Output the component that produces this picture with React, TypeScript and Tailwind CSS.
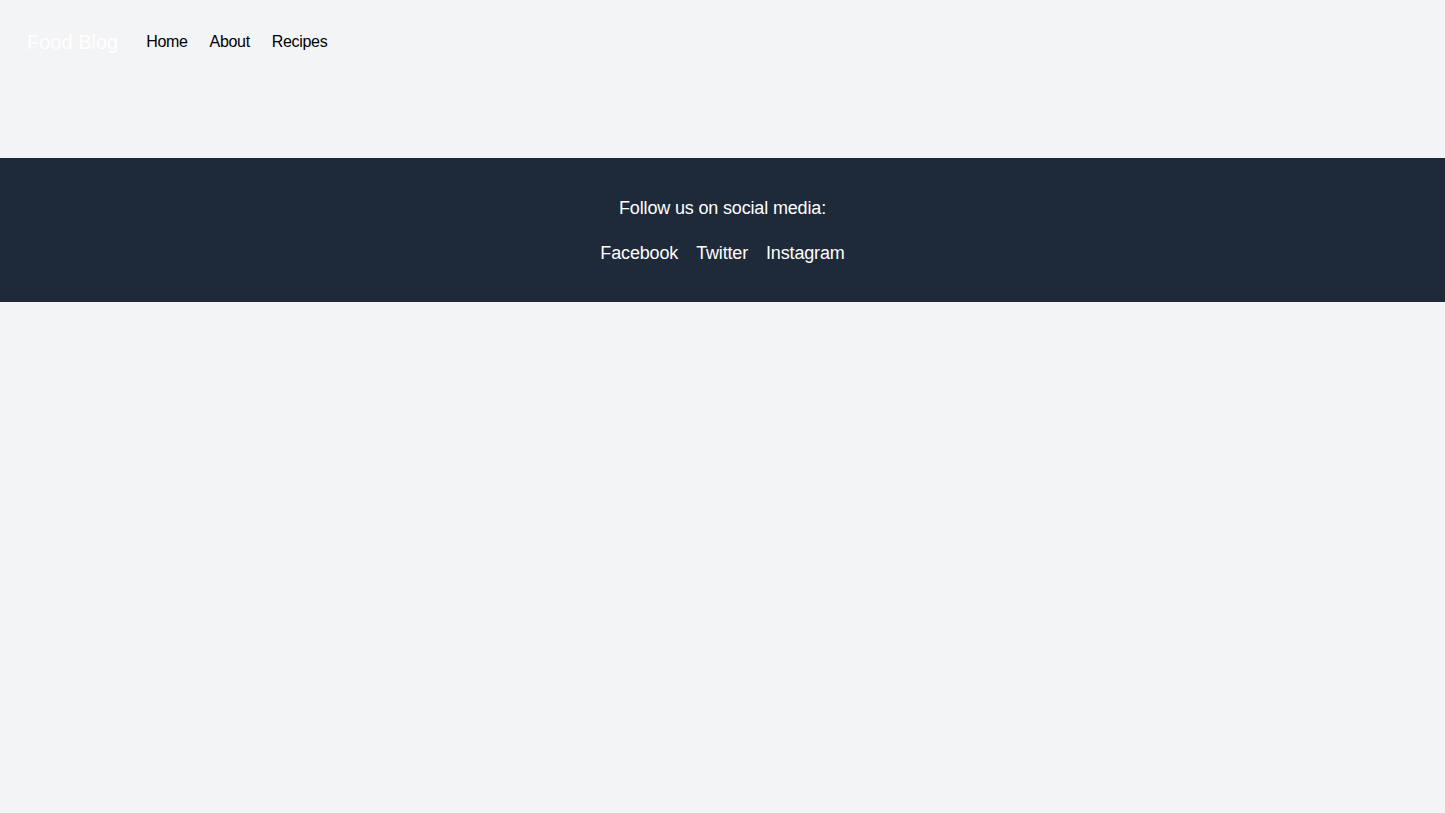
import React from 'react';

export default function App() {
  return (
    <div className="min-h-screen bg-gray-100 font-['Liberation_Sans',Arial,sans-serif]">
      <header className="h-[158px] px-[27px] pt-[28px]">
        <nav className="flex items-center">
          <a href="#" className="text-xl text-white mr-[28px]">Food Blog</a>
          <ul className="flex items-center gap-[22px] text-base text-black tracking-[-0.02em]">
            <li><a href="#">Home</a></li>
            <li><a href="#">About</a></li>
            <li><a href="#">Recipes</a></li>
          </ul>
        </nav>
      </header>

      <footer className="bg-gray-800 text-white text-center pt-9 pb-[35px] tracking-[-0.01em]">
        <p className="text-lg">Follow us on social media:</p>
        <div className="mt-[17px] flex justify-center gap-[18px] text-lg">
          <a href="#">Facebook</a>
          <a href="#">Twitter</a>
          <a href="#">Instagram</a>
        </div>
      </footer>
    </div>
  );
}
